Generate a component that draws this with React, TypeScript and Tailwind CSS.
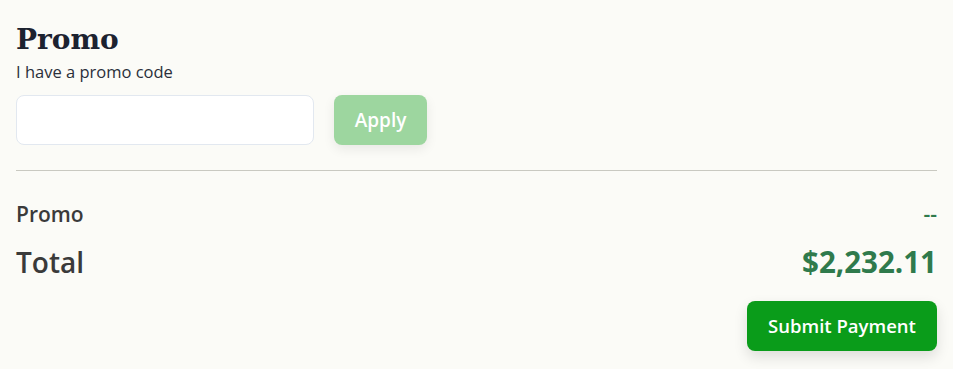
import { type FC, useState } from "react";

const App: FC = () => {
  const [code, setCode] = useState("");

  return (
    <div className="min-h-screen bg-[#fbfbf7] px-4 pt-5 font-['Open_Sans',sans-serif] text-[#3a3a3a]">
      {/* Promo entry */}
      <h2 className="font-['DejaVu_Serif',serif] text-[28px] font-bold leading-[40px] text-[#1c2230]">
        Promo
      </h2>
      <p className="text-[16.5px] leading-[24px] text-[#2a2f3a]">I have a promo code</p>

      <div className="mt-[11px] flex items-center gap-5">
        <input
          value={code}
          onChange={(e) => setCode(e.target.value)}
          className="h-[50px] w-[298px] rounded-lg border border-[#e2e8f0] bg-white px-3 text-base outline-none"
        />
        <button
          disabled={!code}
          className="h-[50px] w-[93px] rounded-lg bg-[#9dd69f] text-[19px] font-semibold text-white shadow-[0_4px_12px_rgba(0,0,0,0.08)]"
        >
          Apply
        </button>
      </div>

      <hr className="mt-[25px] border-t border-[#c9c9c1]" />

      {/* Summary */}
      <div className="mt-[28px] flex items-center justify-between">
        <span className="text-[21px] font-semibold">Promo</span>
        <span className="text-[21px] font-semibold text-[#2f7a4c]">--</span>
      </div>
      <div className="mt-[9px] flex items-center justify-between">
        <span className="text-[28px] font-semibold">Total</span>
        <span className="text-[29.5px] font-bold text-[#2f7a4c]">$2,232.11</span>
      </div>

      <div className="mt-[17px] flex justify-end">
        <button className="h-[50px] w-[190px] rounded-lg bg-[#0a9c1a] text-[18.5px] font-semibold text-white shadow-[0_6px_14px_rgba(0,0,0,0.12)]">
          Submit Payment
        </button>
      </div>
    </div>
  );
};

export default App;
